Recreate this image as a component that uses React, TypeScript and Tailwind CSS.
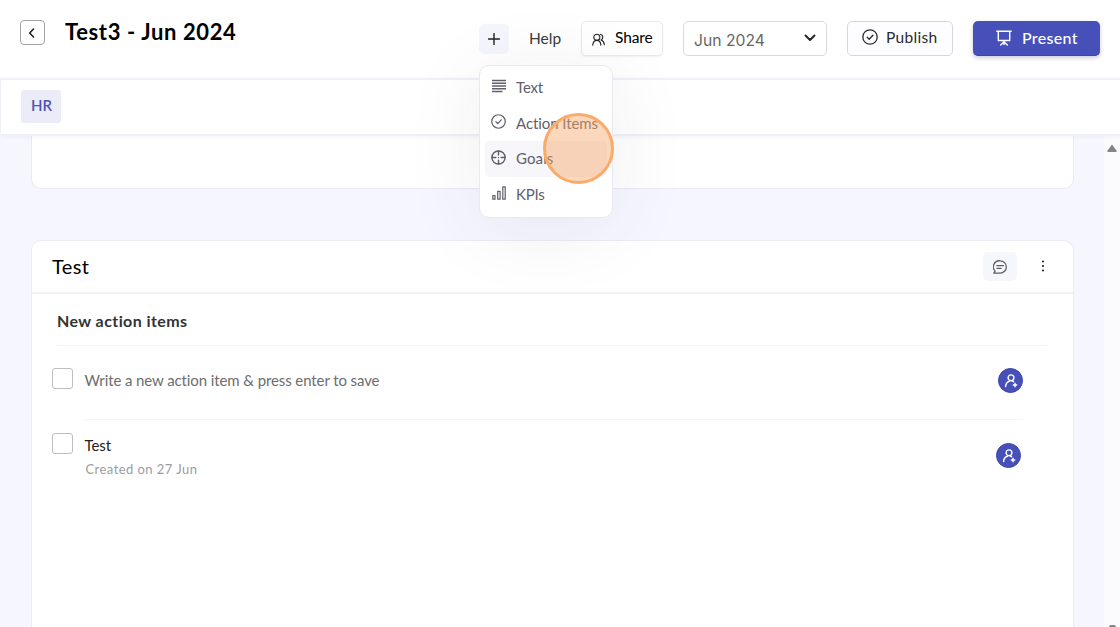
import React from "react";

type IconProps = { className?: string };

const stroke = {
  fill: "none",
  stroke: "currentColor",
  strokeLinecap: "round" as const,
  strokeLinejoin: "round" as const,
};

const CheckCircle = ({ className }: IconProps) => (
  <svg viewBox="0 0 16 16" className={className} {...stroke} strokeWidth={1.3}>
    <circle cx="8" cy="8" r="7.2" />
    <path d="M5.2 8.3l2 1.9 3.7-4" />
  </svg>
);

const TextLines = ({ className }: IconProps) => (
  <svg viewBox="0 0 14 14" className={className} {...stroke} strokeLinecap="butt" strokeWidth={1.5}>
    <path d="M0 1.4h14M0 4.2h14M0 7h14M0 9.8h14M0 12.6h10.5" />
  </svg>
);

const Target = ({ className }: IconProps) => (
  <svg viewBox="0 0 16 16" className={className} {...stroke} strokeWidth={1.5}>
    <circle cx="8" cy="8" r="7" />
    <path d="M8 1v4.2M8 10.8V15M1 8h4.2M10.8 8H15" />
    <path d="M8 8h.01" />
  </svg>
);

const Bars = ({ className }: IconProps) => (
  <svg viewBox="0 0 14 14" className={className} {...stroke} strokeWidth={1.2}>
    <rect x="0.8" y="9.6" width="2.2" height="3.6" />
    <rect x="5.7" y="5.4" width="2.4" height="7.8" />
    <rect x="10.8" y="0.8" width="2.4" height="12.4" />
  </svg>
);

const People = ({ className }: IconProps) => (
  <svg viewBox="0 0 14 14" className={className} {...stroke} strokeWidth={1.2}>
    <circle cx="5.2" cy="4.6" r="3.3" />
    <path d="M0.8 13c.3-2.9 2-5.1 4.4-5.1s4.1 2.2 4.4 5.1" />
    <path d="M9 1.3a3.3 3.3 0 0 1 .8 6.2c1.8.6 3.2 2.5 3.5 5.1" />
  </svg>
);

const Easel = ({ className }: IconProps) => (
  <svg viewBox="0 0 16 16" className={className} {...stroke} strokeWidth={1.4}>
    <path d="M0.8 1.2h14.4M2.3 1.2v9.3h11.4V1.2M8 10.5v2.4M8 11.7l-3.3 3.3M8 11.7l3.3 3.3M8 12.5v2" />
  </svg>
);

const Comment = ({ className }: IconProps) => (
  <svg viewBox="0 0 14 14" className={className} {...stroke} strokeWidth={1.3}>
    <path d="M7.2.8a6.1 6.1 0 1 1 0 12.3H.8l1.3-2A6.1 6.1 0 0 1 7.2.8z" />
    <path d="M3.9 5.7h6.6M3.9 8.3h4.2" />
  </svg>
);

const Assign = () => (
  <span className="flex h-[25px] w-[25px] items-center justify-center rounded-full border border-[#3c46a6] bg-[#4650b8] text-white">
    <svg viewBox="0 0 14 14" className="h-[14px] w-[14px]" {...stroke} strokeWidth={1.4}>
      <circle cx="7" cy="3.800" r="2.900" />
      <path d="M1.600 12.500c.2-2.600 1.700-4.700 3.900-5.300M8.500 7.200l1 .5" />
      <path d="M11 9.300v3.400M9.300 11h3.400" />
    </svg>
  </span>
);

const menu = [
  { label: "Text", icon: <TextLines className="h-[14px] w-[14px]" />, active: false, tracking: "tracking-[-0.15px]" },
  { label: "Action Items", icon: <CheckCircle className="h-[15px] w-[15px]" />, active: false, tracking: "tracking-[-0.07px]" },
  { label: "Goals", icon: <Target className="h-[15px] w-[15px]" />, active: true, tracking: "tracking-[0.1px]" },
  { label: "KPIs", icon: <Bars className="h-[14px] w-[14px]" />, active: false, tracking: "tracking-[-0.25px]" },
];

function AddMenu() {
  return (
    <div className="absolute top-[41px] left-0 z-20 h-[153px] w-[134px] rounded-[10px] border border-[#e9e8f4] bg-white px-[5px] py-1 shadow-[0_10px_80px_rgba(40,40,60,0.08)]">
      {menu.map((m) => (
        <div
          key={m.label}
          className={`flex h-[35.6px] items-center rounded-[5px] pl-[6px] text-[15px] whitespace-nowrap text-[#5f5e6b] ${m.active ? "bg-[#f7f6fb]" : ""}`}
        >
          <span className="mb-[3px] flex w-[15px] justify-center">{m.icon}</span>
          <span className={`mb-px ml-[10px] ${m.tracking}`}>{m.label}</span>
        </div>
      ))}
      <div className="absolute top-[47px] left-[63px] h-[71px] w-[71px] rounded-full border-[3px] border-[#fbab68] bg-[#f7a668]/45" />
    </div>
  );
}

function Header() {
  return (
    <header className="flex h-[78px] shrink-0 items-start bg-white">
      <button className="mt-5 ml-5 flex h-[25px] w-[25px] items-center justify-center rounded-[4px] border border-[#a3a3a3] text-[#222]">
        <svg viewBox="0 0 10 10" className="mr-[2px] h-[10px] w-[10px]" {...stroke} strokeWidth={1.6}>
          <path d="M6.5 1L2.7 5l3.8 4" />
        </svg>
      </button>
      <h1 className="mt-[17px] ml-5 w-[414px] text-[22px] leading-[30px] font-bold tracking-[0.62px] text-black">
        Test3 - Jun 2024
      </h1>
      <div className="relative mt-6">
        <button className="flex h-[30px] w-[30px] items-center justify-center rounded-[5px] bg-[#f5f5fe] text-[#222]">
          <svg viewBox="0 0 12 12" className="h-3 w-3" {...stroke} strokeWidth={1.4}>
            <path d="M6 .5v11M.5 6h11" />
          </svg>
        </button>
        <AddMenu />
      </div>
      <span className="mt-[27px] ml-5 w-[52px] text-[15.5px] leading-[22px] text-[#3a3a3a]">Help</span>
      <button className="mt-[21px] flex h-[35px] w-[82px] items-center rounded-[5px] border border-[#e9e9f3] bg-white pl-[10px] text-[15.5px] text-black shadow-[0_1px_2px_rgba(60,60,100,0.08)]">
        <People className="mt-px mr-[10px] h-[13px] w-[13px] shrink-0 text-[#222]" />
        <span className="mb-px tracking-[-0.1px]">Share</span>
      </button>
      <div className="mt-[21px] ml-5 flex h-[35px] w-[144px] items-center justify-between rounded-[5px] border border-[#d9d9e6] bg-white pr-[10px] pl-[10px] font-['Inter'] text-[15.7px] text-[#666]">
        <span className="mt-1">Jun 2024</span>
        <svg viewBox="0 0 12 8" className="mb-px h-[8px] w-3 text-[#222]" {...stroke} strokeWidth={1.9}>
          <path d="M1.5 1.5L6 6l4.5-4.5" />
        </svg>
      </div>
      <button className="mt-[21px] ml-5 flex h-[35px] w-[106px] items-center rounded-[5px] border border-[#d5d5e6] bg-[#fdfdff] pl-[14px] text-[15.5px] text-[#2a2930]">
        <CheckCircle className="mr-2 mb-[3px] h-4 w-4 shrink-0" />
        <span className="mb-px tracking-[0.3px]">Publish</span>
      </button>
      <button className="mt-[21px] ml-5 flex h-[35px] w-[127px] items-center rounded-[5px] border-b border-[#3d479f] bg-[#4650b8] pl-[23px] text-[16px] font-medium text-white shadow-[0_2px_4px_rgba(50,50,110,0.25)]">
        <Easel className="mr-[10px] h-4 w-4 shrink-0" />
        <span className="tracking-[0.3px]">Present</span>
      </button>
    </header>
  );
}

const Checkbox = () => <span className="h-[21px] w-[21px] shrink-0 rounded-[3px] border border-[#bebebe] bg-white" />;

export default function App() {
  return (
    <div className="flex h-[627px] w-[1120px] flex-col overflow-hidden bg-[#f6f7fe] font-['Lato','Liberation_Sans',sans-serif] [font-variant-ligatures:none]">
      <Header />
      <nav className="z-10 flex h-[58px] shrink-0 items-start border-y-2 border-l border-[#f0f0f9] bg-white pt-[10px] pl-5 shadow-[0_1px_4px_rgba(90,90,160,0.07)]">
        <span className="flex h-[33px] w-10 items-center justify-center rounded-[3px] bg-[#ecebf8] pb-[2px] pl-px text-[15px] font-semibold text-[#4d55b5]">
          HR
        </span>
      </nav>
      <div className="flex min-h-0 flex-1">
        <main className="flex flex-1 flex-col pr-[30px] pl-[31px]">
          <section className="h-[53px] shrink-0 rounded-b-[10px] border border-t-0 border-[#e9e9f3] bg-white" />
          <section className="mt-[51px] flex-1 rounded-t-[10px] border border-b-0 border-[#ececf4] bg-white">
            <div className="flex h-[53px] items-center border-b-2 border-[#f2f2f5] pl-5">
              <h2 className="mb-[2px] flex-1 text-[20px] tracking-[0.4px] text-black">Test</h2>
              <span className="mr-6 flex h-[29px] w-[34px] items-center justify-center rounded-[5px] bg-[#f6f6fd] text-[#5f5e6b]">
                <Comment className="h-[14px] w-[14px]" />
              </span>
              <svg viewBox="0 0 4 12" className="mr-7 mb-px h-3 w-1 fill-[#222]">
                <circle cx="2" cy="1.5" r="1.05" />
                <circle cx="2" cy="6" r="1.05" />
                <circle cx="2" cy="10.5" r="1.05" />
              </svg>
            </div>
            <h3 className="mr-[26px] ml-[25px] h-[52px] border-b border-[#f3f3f5] pt-[15px] text-[16px] leading-6 font-bold tracking-[0.42px] text-[#333]">
              New action items
            </h3>
            <div className="mr-[50px] ml-[19.5px] flex h-[74px] items-start">
              <span className="mt-[22px] flex"><Checkbox /></span>
              <div className="ml-3 flex h-[74px] flex-1 items-start border-b border-[#f5f5f7]">
                <span className="mt-[23px] flex-1 text-[15px] leading-[22px] tracking-[-0.1px] text-[#6d6d6d]">
                  Write a new action item &amp; press enter to save
                </span>
                <span className="mt-[22px]"><Assign /></span>
              </div>
            </div>
            <div className="mr-[52px] ml-[19.5px] flex items-start">
              <span className="mt-[13px] flex"><Checkbox /></span>
              <div className="ml-3 flex-1">
                <p className="mt-[14px] text-[15px] leading-[22px] tracking-[-0.1px] text-[#222]">Test</p>
                <p className="mt-[3px] ml-px text-[13px] leading-5 tracking-[0.45px] text-[#9c9ca3]">Created on 27 Jun</p>
              </div>
              <span className="mt-[23px]"><Assign /></span>
            </div>
          </section>
        </main>
        <aside className="flex w-4 flex-col items-center justify-between bg-[#fbfbfd] pt-2">
          <svg viewBox="0 0 10 8" className="h-2 w-[10px] fill-[#858585]">
            <path d="M5 0.5L9.5 6.5Q10 8 9 8H1Q0 8 .5 6.5z" />
          </svg>
          <span className="h-[2px] w-[7px] rounded-t-full bg-[#858585]" />
        </aside>
      </div>
    </div>
  );
}
